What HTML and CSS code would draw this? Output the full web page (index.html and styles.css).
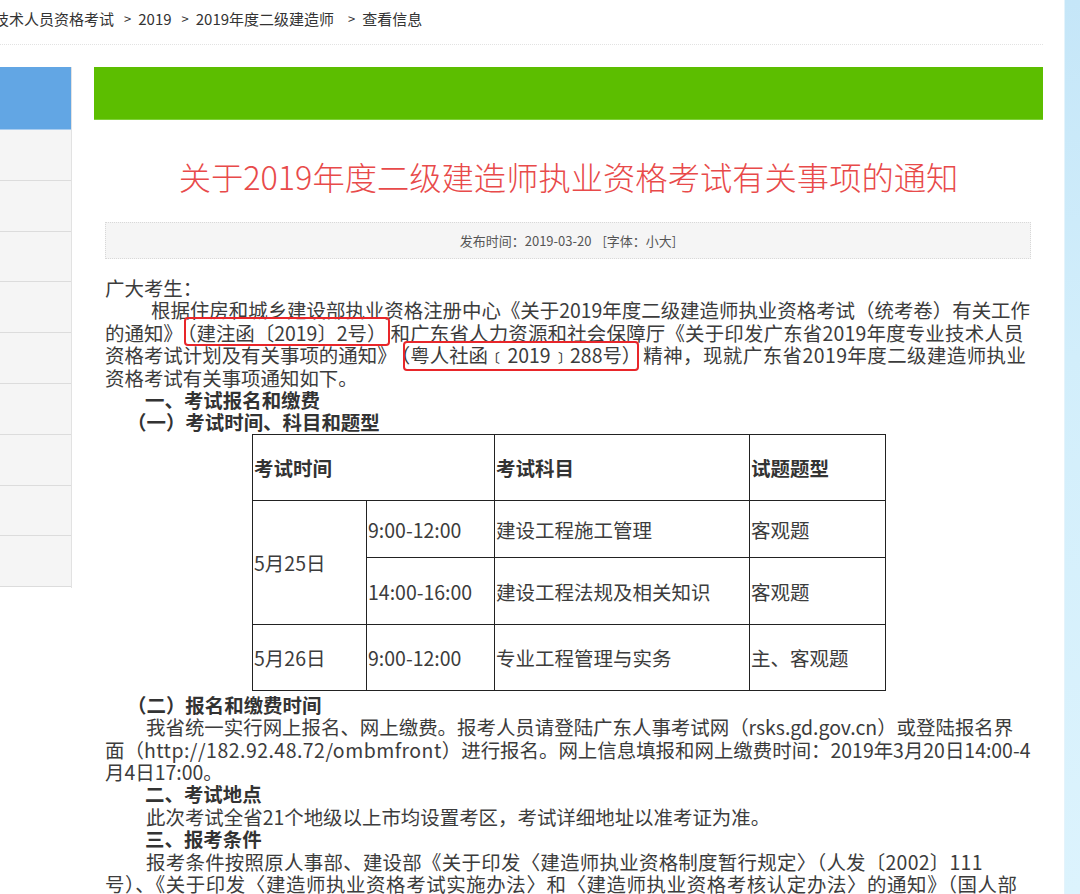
FILE: index.html
```html
<!DOCTYPE html>
<html lang="zh-CN">
<head>
<meta charset="utf-8">
<title>关于2019年度二级建造师执业资格考试有关事项的通知</title>
<link rel="stylesheet" href="styles.css">
</head>
<body>
<div class="page">
  <div class="main">
    <div class="crumbs">
      <span class="crumb first">技术人员资格考试</span>
      <span class="sep">&gt;</span>
      <span class="crumb">2019</span>
      <span class="sep">&gt;</span>
      <span class="crumb">2019年度二级建造师</span>
      <span class="sep wide">&gt;</span>
      <span class="crumb">查看信息</span>
    </div>
    <div class="content">
      <div class="sidebar">
        <div class="side-head"></div>
        <div class="side-item"></div>
        <div class="side-item"></div>
        <div class="side-item"></div>
        <div class="side-item"></div>
        <div class="side-item"></div>
        <div class="side-item"></div>
        <div class="side-item"></div>
        <div class="side-item"></div>
        <div class="side-item"></div>
      </div>
      <div class="article">
        <div class="green-bar"></div>
        <h1 class="title">关于2019年度二级建造师执业资格考试有关事项的通知</h1>
        <div class="meta">发布时间：2019-03-20<span class="font-size">[字体：小大]</span></div>
        <div class="body">
          <p class="line">广大考生：</p>
          <p class="line para">根据住房和城乡建设部执业资格注册中心《关于2019年度二级建造师执业资格考试（统考卷）有关工作<br>的通知》<span class="mark m1">（建注函〔2019〕2号）</span><span class="sp2">和广东省人力资源和社会保障厅《关于印发广东省2019年度专业技术人员</span><br>资格考试计划及有关事项的通知》<span class="mark m2">（粤人社函﹝2019﹞288号）</span><span class="sp5">精神，现就广东省2019年度二级建造师执业</span><br>资格考试有关事项通知如下。</p>
          <p class="line h1">一、考试报名和缴费</p>
          <p class="line h2">（一）考试时间、科目和题型</p>
          <table class="exam">
            <colgroup>
              <col class="c1"><col class="c2"><col class="c3"><col class="c4">
            </colgroup>
            <tr class="r0">
              <th colspan="2">考试时间</th>
              <th>考试科目</th>
              <th>试题题型</th>
            </tr>
            <tr class="r1">
              <td rowspan="2">5月25日</td>
              <td>9:00-12:00</td>
              <td>建设工程施工管理</td>
              <td>客观题</td>
            </tr>
            <tr class="r2">
              <td>14:00-16:00</td>
              <td>建设工程法规及相关知识</td>
              <td>客观题</td>
            </tr>
            <tr class="r3">
              <td>5月26日</td>
              <td>9:00-12:00</td>
              <td>专业工程管理与实务</td>
              <td>主、客观题</td>
            </tr>
          </table>
          <p class="line h2 after-table">（二）报名和缴费时间</p>
          <p class="line para2">我省统一实行网上报名、网上缴费。报考人员请登陆广东人事考试网（rsks.gd.gov.cn）或登陆报名界<br>面（<span class="url">http://182.92.48.72/ombmfront</span>）进行报名。网上信息填报和网上缴费时间：2019年3月20日14:00-4<br>月4日17:00。</p>
          <p class="line h1">二、考试地点</p>
          <p class="line para2">此次考试全省21个地级以上市均设置考区，考试详细地址以准考证为准。</p>
          <p class="line h1">三、报考条件</p>
          <p class="line para2"><span class="sp3">报考条件按照原人事部、建设部《关于印发〈建造师执业资格制度暂行规定〉（人发〔2002〕111</span><br><span class="sp6">号）、《关于印发〈建造师执业资格考试实施办法〉和〈建造师执业资格考核认定办法〉的通知》（国人部</span></p>
        </div>
      </div>
    </div>
  </div>
  <div class="strip"></div>
</div>
</body>
</html>
```

FILE: styles.css
```css
html, body {
  margin: 0;
  padding: 0;
  background: #ffffff;
}
body {
  width: 1080px;
  height: 894px;
  overflow: hidden;
  font-family: "Noto Sans CJK SC", "Noto Sans", sans-serif;
  color: #3c3c3c;
}
.page {
  display: flex;
  width: 1080px;
  height: 894px;
}
.main {
  width: 1064px;
  flex: none;
  overflow: hidden;
}
.strip {
  width: 16px;
  flex: none;
  height: 894px;
  background: linear-gradient(to bottom, #c5e6f8 0%, #d2eefb 40%, #dcf3fd 100%);
  border-left: 1px solid #e4f3fb;
  box-sizing: border-box;
}

/* breadcrumb */
.crumbs {
  width: 1043px;
  height: 45px;
  box-sizing: border-box;
  border-bottom: 1px dotted #e2e2e2;
  display: flex;
  align-items: flex-start;
  font-size: 15px;
  line-height: 38px;
  color: #333;
  white-space: nowrap;
}
.crumb.first {
  margin-left: -6px;
}
.sep {
  margin: 0 7px 0 10px;
  font-size: 13px;
}
.sep.wide {
  margin-left: 14px;
}

/* layout */
.content {
  display: flex;
  margin-top: 22px;
}
.sidebar {
  width: 72px;
  flex: none;
  border-right: 1px solid #e2e2e2;
  box-sizing: border-box;
  height: 521px;
}
.side-head {
  height: 62px;
  background: #62a6e4;
  border-bottom: 1px solid #a9cdf0;
}
.side-item {
  height: 49.8px;
  background: #f5f5f5;
  border-bottom: 1px solid #dcdcdc;
}
.article {
  width: 949px;
  margin-left: 22px;
  flex: none;
}
.green-bar {
  height: 52px;
  background: #5cbe00;
  border-bottom: 1px solid #7fd13a;
}
.title {
  margin: 36px 0 0 0;
  font-size: 32.3px;
  line-height: 40px;
  font-weight: 300;
  color: #e84a4a;
  text-align: center;
  white-space: nowrap;
}
.meta {
  margin: 26px 0 0 11px;
  width: 926px;
  height: 37px;
  box-sizing: border-box;
  background: #f5f5f5;
  border: 1px dotted #d8d8d8;
  font-size: 13px;
  line-height: 35px;
  color: #555;
  text-align: center;
}
.font-size {
  margin-left: 11px;
}

/* body text */
.body {
  margin: 18px 0 0 11px;
  width: 926px;
  font-size: 19.45px;
  line-height: 22.4px;
}
.line {
  margin: 0;
  white-space: nowrap;
}
.para {
  text-indent: 46px;
}
.para2 {
  text-indent: 41px;
}
.h1 {
  font-weight: 700;
  color: #333;
  padding-left: 40px;
}
.h2 {
  font-weight: 700;
  color: #333;
  padding-left: 22px;
}
.after-table {
  margin-top: 3px;
}
.url {
  letter-spacing: 0.5px;
}
.sp2 {
  letter-spacing: 0.2px;
}
.sp3 {
  letter-spacing: 0.28px;
}
.sp5 {
  letter-spacing: 0.45px;
}
.sp6 {
  letter-spacing: 0.6px;
}
.mark {
  position: relative;
}
.mark::after {
  content: "";
  position: absolute;
  top: 50%;
  height: 29px;
  margin-top: -15px;
  box-sizing: border-box;
  border: 2px solid #e8262a;
  border-radius: 4px;
}
.m1 {
  padding: 0 4px 0 4px;
}
.m1::after {
  left: 1px;
  right: 0;
}
.m2 {
  padding: 0 2px 0 4px;
}
.m2::after {
  left: 6px;
  right: 4px;
  margin-top: -14px;
  height: 30px;
}

/* table */
.exam {
  margin-left: 147px;
  border-collapse: collapse;
  width: 633px;
  table-layout: fixed;
  font-size: 19.5px;
  line-height: 24px;
  color: #3c3c3c;
}
.exam .c1 { width: 114px; }
.exam .c2 { width: 128px; }
.exam .c3 { width: 255px; }
.exam .c4 { width: 136px; }
.exam th, .exam td {
  border: 1px solid #222;
  padding: 2px 0 0 1px;
  text-align: left;
  vertical-align: middle;
  white-space: nowrap;
}
.exam th {
  font-weight: 700;
  color: #333;
}
.exam .r0 { height: 66px; }
.exam .r1 { height: 57px; }
.exam .r2 { height: 67px; }
.exam .r3 { height: 66px; }
```
